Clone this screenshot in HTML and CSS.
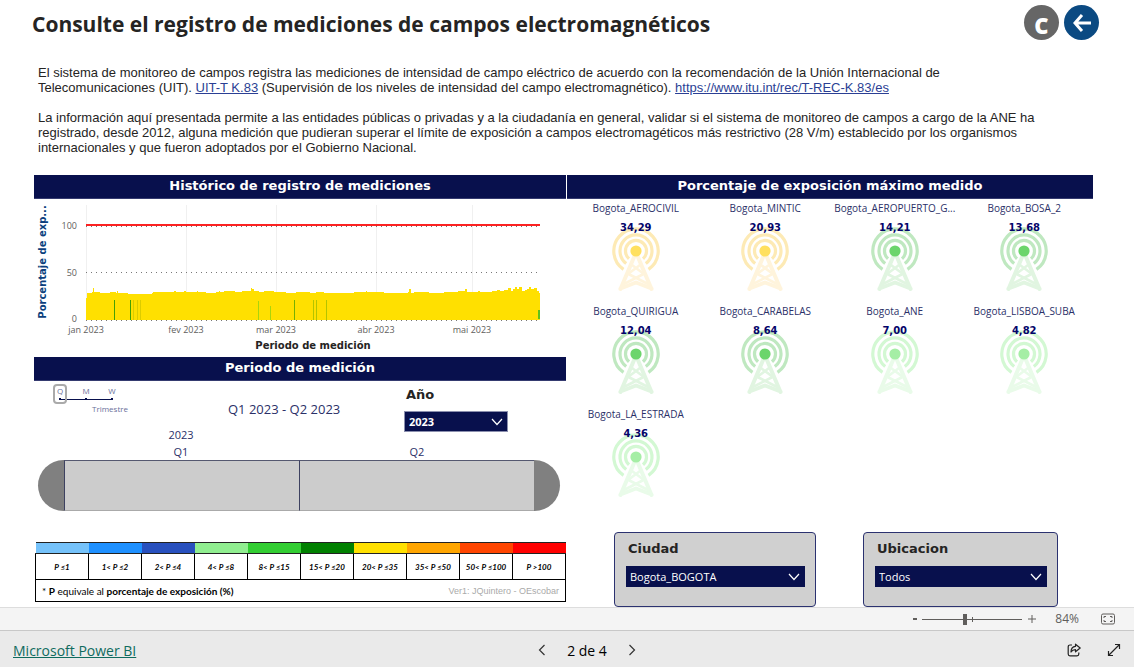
FILE: index.html
```
<!DOCTYPE html>
<html lang="es">
<head>
<meta charset="utf-8">
<title>Mediciones de campos electromagnéticos</title>
<link rel="stylesheet" href="styles.css">
</head>
<body>
<svg class="defs" aria-hidden="true">
  <symbol id="antenna" viewBox="0 0 48 64">
    <g class="tower" fill="none" stroke-linecap="round" stroke-linejoin="round">
      <path stroke-width="4" d="M8.500 62 22.500 29M39.500 62 25.500 29M8.500 61.500 24 55.500 39.500 61.500"/>
      <path stroke-width="2.600" d="M20 38 32 47M28 38 16 47M16.500 47 36 57M31.500 47 12 57"/>
    </g>
    <g class="rings" fill="none" stroke-width="3.200">
      <path d="M11.500 42.400A22.200 22.200 0 1 1 36.500 42.400"/>
      <path d="M14.200 36.600A16 16 0 1 1 33.800 36.600"/>
      <path d="M17 31.800A10.500 10.500 0 1 1 31 31.800"/>
    </g>
    <circle class="dot" cx="24" cy="24" r="5.600"/>
  </symbol>
  <symbol id="chevron" viewBox="0 0 12 8"><path d="M1 1 6 6.500 11 1" fill="none" stroke="currentColor" stroke-width="1.200"/></symbol>
</svg>

<main class="report">
  <header class="head">
    <h1 class="title">Consulte el registro de mediciones de campos electromagnéticos</h1>
    <nav class="head-actions">
      <button class="round round-gray" type="button" aria-label="Borrar filtros">C</button>
      <button class="round round-blue" type="button" aria-label="Atrás">
        <svg width="20" height="20" viewBox="0 0 20 20" fill="none" stroke="currentColor" stroke-width="3"><path d="M10 2 3 10 10 18M3 10H19"/></svg>
      </button>
    </nav>
  </header>

  <section class="intro">
    <p>El sistema de monitoreo de campos registra las mediciones de intensidad de campo eléctrico de acuerdo con la recomendación de la Unión Internacional de<br>Telecomunicaciones (UIT). <a href="#">UIT-T K.83</a> (Supervisión de los niveles de intensidad del campo electromagnético). <a href="#">https://www.itu.int/rec/T-REC-K.83/es</a></p>
    <p>La información aquí presentada permite a las entidades públicas o privadas y a la ciudadanía en general, validar si el sistema de monitoreo de campos a cargo de la ANE ha<br>registrado, desde 2012, alguna medición que pudieran superar el límite de exposición a campos electromagéticos más restrictivo (28 V/m) establecido por los organismos<br>internacionales y que fueron adoptados por el Gobierno Nacional.</p>
  </section>

  <div class="columns">
    <div class="col">
      <h2 class="band">Histórico de registro de mediciones</h2>
      <svg class="chart" viewBox="0 0 532 158" role="img" aria-label="Histórico de registro de mediciones">
        <path class="grid" d="M52.500 6V121M152.500 6V121M242.500 6V121M342.500 6V121M438.500 6V121"/>
        <path class="dots" d="M52 27.500H506M52 73.500H506M52 121.500H506"/>
        <g class="area" transform="translate(0 1)">
          <path d="M52 120V98H53V93H58V92H59V88H60V92H66V93H76V92H82V93H83V91H84V93H94V94H118V93H119V92H140V91H142V92H150V91H152V92H163V91H164V92H172V93H182V92H185V91H186V92H190V91H201V92H208V91H217V88H218V89H220V91H225V92H230V91H240V92H252V93H262V92H276V93H282V92H290V93H320V92H332V91H333V92H350V93H374V92H375V89H377V93H380V92H395V93H410V92H424V91H431V89H433V92H444V91H446V92H458V91H463V90H466V91H470V90H474V88H477V91H479V89H481V87H483V89H485V87H488V91H491V90H493V89H495V87H497V89H500V88H503V91H505V93H506V120Z"/>
        </g>
        <g class="bars">
          <path stroke="#44a005" d="M80.500 101V121M96.500 101V121"/>
          <path stroke="#dccc00" d="M99.500 101V121M103.500 101V121M106.500 101V121"/>
          <path stroke="#a9d40c" d="M224.500 102V121M236.500 107V121"/>
          <path stroke="#74b003" d="M260.500 101V121"/>
          <path stroke="#b4c400" d="M279.500 101V121M282.500 101V121M292.500 101V121"/>
          <path stroke="#5ec11c" stroke-width="2" d="M505 111V120"/>
        </g>
        <path class="limit" d="M52 26H506"/>
        <g class="ticks">
          <g text-anchor="end"><text x="43" y="30">100</text><text x="43" y="77">50</text><text x="43" y="123">0</text></g>
          <g text-anchor="middle"><text x="52" y="134">jan 2023</text><text x="152" y="134">fev 2023</text><text x="242" y="134">mar 2023</text><text x="342" y="134">abr 2023</text><text x="438" y="134">mai 2023</text></g>
        </g>
        <text class="axis" text-anchor="middle" x="279" y="150">Periodo de medición</text>
        <text class="axis axis-y" text-anchor="middle" transform="translate(12 63) rotate(-90)">Porcentaje de exp...</text>
      </svg>

      <h2 class="band">Periodo de medición</h2>
      <section class="period">
        <div class="period-top">
          <div class="grain">
            <div class="grain-row">
              <button type="button" class="grain-btn active">Q</button>
              <button type="button" class="grain-btn">M</button>
              <button type="button" class="grain-btn">W</button>
            </div>
            <span class="grain-name">Trimestre</span>
          </div>
          <output class="range">Q1 2023 - Q2 2023</output>
          <div class="year">
            <label class="filter-label" for="year">Año</label>
            <div class="picker">
              <select id="year" class="bold"><option>2023</option></select>
              <svg class="chev" width="12" height="8"><use href="#chevron"/></svg>
            </div>
          </div>
        </div>
        <div class="quarters">
          <span class="quarter">2023<br>Q1</span>
          <span class="quarter">Q2</span>
        </div>
        <div class="timeline">
          <button type="button" class="cap cap-l" aria-label="Inicio del periodo"></button>
          <button type="button" class="block" aria-label="Q1 2023"></button>
          <button type="button" class="block" aria-label="Q2 2023"></button>
          <button type="button" class="cap cap-r" aria-label="Fin del periodo"></button>
        </div>
      </section>

      <table class="legend">
        <thead>
          <tr><th class="c1"></th><th class="c2"></th><th class="c3"></th><th class="c4"></th><th class="c5"></th><th class="c6"></th><th class="c7"></th><th class="c8"></th><th class="c9"></th><th class="c10"></th></tr>
        </thead>
        <tbody>
          <tr><td>P ≤1</td><td>1&lt; P ≤2</td><td>2&lt; P ≤4</td><td>4&lt; P ≤8</td><td>8&lt; P ≤15</td><td>15&lt; P ≤20</td><td>20&lt; P ≤35</td><td>35&lt; P ≤50</td><td>50&lt; P ≤100</td><td>P &gt;100</td></tr>
        </tbody>
        <tfoot>
          <tr><td colspan="10"><div class="note"><span>* <b>P</b> equivale al <b>porcentaje de exposición (%)</b></span><span class="version">Ver1: JQuintero - OEscobar</span></div></td></tr>
        </tfoot>
      </table>
    </div>

    <div class="col">
      <h2 class="band">Porcentaje de exposición máximo medido</h2>
      <ul class="stations">
        <li class="station yellow"><span class="name">Bogota_AEROCIVIL</span><div class="reading"><svg class="icon"><use href="#antenna"/></svg><b>34,29</b></div></li>
        <li class="station yellow"><span class="name">Bogota_MINTIC</span><div class="reading"><svg class="icon"><use href="#antenna"/></svg><b>20,93</b></div></li>
        <li class="station green"><span class="name">Bogota_AEROPUERTO_G...</span><div class="reading"><svg class="icon"><use href="#antenna"/></svg><b>14,21</b></div></li>
        <li class="station green"><span class="name">Bogota_BOSA_2</span><div class="reading"><svg class="icon"><use href="#antenna"/></svg><b>13,68</b></div></li>
        <li class="station green"><span class="name">Bogota_QUIRIGUA</span><div class="reading"><svg class="icon"><use href="#antenna"/></svg><b>12,04</b></div></li>
        <li class="station green"><span class="name">Bogota_CARABELAS</span><div class="reading"><svg class="icon"><use href="#antenna"/></svg><b>8,64</b></div></li>
        <li class="station light"><span class="name">Bogota_ANE</span><div class="reading"><svg class="icon"><use href="#antenna"/></svg><b>7,00</b></div></li>
        <li class="station light"><span class="name">Bogota_LISBOA_SUBA</span><div class="reading"><svg class="icon"><use href="#antenna"/></svg><b>4,82</b></div></li>
        <li class="station light"><span class="name">Bogota_LA_ESTRADA</span><div class="reading"><svg class="icon"><use href="#antenna"/></svg><b>4,36</b></div></li>
      </ul>
      <div class="filters">
        <div class="card">
          <label class="filter-label" for="city">Ciudad</label>
          <div class="picker"><select id="city"><option>Bogota_BOGOTA</option></select><svg class="chev" width="12" height="8"><use href="#chevron"/></svg></div>
        </div>
        <div class="card">
          <label class="filter-label" for="place">Ubicacion</label>
          <div class="picker"><select id="place"><option>Todos</option></select><svg class="chev" width="12" height="8"><use href="#chevron"/></svg></div>
        </div>
      </div>
    </div>
  </div>
</main>

<div class="zoombar">
  <button class="plain" type="button" aria-label="Alejar"><svg width="6" height="12" viewBox="0 0 6 12"><path d="M1 6H5" stroke="currentColor" stroke-width="2"/></svg></button>
  <div class="zoom"><input type="range" min="0" max="200" value="84" aria-label="Zoom"></div>
  <button class="plain" type="button" aria-label="Acercar"><svg width="8" height="12" viewBox="0 0 8 12"><path d="M0 6H8M4 2V10" stroke="currentColor"/></svg></button>
  <span class="percent">84%</span>
  <button class="plain" type="button" aria-label="Ajustar a la página">
    <svg width="14" height="12" viewBox="0 0 14 12" fill="none" stroke="currentColor"><rect x=".5" y="1" width="13" height="10" rx="1.500"/><path d="M3 5V3.500H5M9 3.500H11V5M11 7V8.500H9M5 8.500H3V7"/></svg>
  </button>
</div>

<footer class="footer">
  <a class="brand" href="#">Microsoft Power BI</a>
  <nav class="pager">
    <button class="plain" type="button" aria-label="Página anterior"><svg width="8" height="12" viewBox="0 0 8 12" fill="none" stroke="currentColor" stroke-width="1.200"><path d="M6.500 1 1.500 6 6.500 11"/></svg></button>
    <span>2 de 4</span>
    <button class="plain" type="button" aria-label="Página siguiente"><svg width="8" height="12" viewBox="0 0 8 12" fill="none" stroke="currentColor" stroke-width="1.200"><path d="M1.500 1 6.500 6 1.500 11"/></svg></button>
  </nav>
  <div class="tools">
    <button class="plain" type="button" aria-label="Compartir"><svg width="14" height="14" viewBox="0 0 14 14" fill="none" stroke="currentColor" stroke-width="1.200" stroke-linejoin="round"><path d="M5 2H3A1.800 1.800 0 0 0 1.200 3.800V11A1.800 1.800 0 0 0 3 12.800H10A1.800 1.800 0 0 0 11.800 11V9.500"/><path d="M8.500 1.200 13.200 5 8.500 8.800V6.700C6.500 6.700 5 7.400 4 9 4 5.500 5.800 3.500 8.500 3.300Z"/></svg></button>
    <button class="plain" type="button" aria-label="Pantalla completa"><svg width="14" height="14" viewBox="0 0 14 14" fill="none" stroke="currentColor" stroke-width="1.200"><path d="M1.500 12.500 12.500 1.500M8 1.500H12.500V6M1.500 8V12.500H6"/></svg></button>
  </div>
</footer>
</body>
</html>
```

FILE: styles.css
```
* { box-sizing: border-box; }

body {
  margin: 0;
  min-height: 100vh;
  display: flex;
  flex-direction: column;
  background: #fff;
  color: #252423;
  font-family: "Open Sans", "Noto Sans", sans-serif;
}

button, select { font: inherit; color: inherit; border: 0; padding: 0; background: none; }
h1, h2, p, ul { margin: 0; padding: 0; }
svg { display: block; }
.defs { position: absolute; width: 0; height: 0; }

.report { flex: 1; display: flex; flex-direction: column; }

.head {
  display: flex;
  justify-content: space-between;
  padding: 5px 35px 0 32px;
}
.title { font-size: 21px; line-height: 38px; font-weight: 700; }
.head-actions { display: flex; gap: 5px; }
.round {
  width: 35px;
  height: 35px;
  border-radius: 50%;
  display: flex;
  align-items: center;
  justify-content: center;
  color: #fff;
}
.round-gray { padding-top: 5px; background: #666; font: 800 22px/30px "Open Sans", sans-serif; }
.round-blue { background: #0b4a82; }

.intro {
  display: flex;
  flex-direction: column;
  gap: 15px;
  padding: 22px 38px 20px;
  font: 13px/15px "Liberation Sans", Arial, sans-serif;
}
.intro a { color: #2b3f94; }

.columns {
  flex: 1;
  display: grid;
  grid-template-columns: 532fr 526fr;
  gap: 1px;
  padding: 0 41px 0 34px;
}
.col { display: flex; flex-direction: column; min-width: 0; }

.band {
  height: 24px;
  background: #08104d;
  border-bottom: 1px solid #353b70;
  color: #fff;
  text-align: center;
  font: 700 13px/21px "DejaVu Sans", sans-serif;
}

.chart { width: 100%; }
.grid { stroke: #f0f0f0; }
.dots { stroke: #777; stroke-dasharray: 1 4; }
.area { fill: #ffe000; shape-rendering: crispEdges; }
.limit { stroke: #fb2222; stroke-width: 2; }
.ticks { font-size: 9px; fill: #605e5c; }
.axis { font: 700 10px "DejaVu Sans", sans-serif; fill: #252423; }
.axis-y { fill: #0b3f7d; }

.period { padding: 0 6px 0 4px; color: #2b3068; }
.period-top { display: flex; height: 44px; }
.grain { width: 90px; margin: 3px 0 0 15px; }
.grain-row {
  display: flex;
  gap: 12px;
  background: linear-gradient(#08104d, #08104d) 7px 15px / 51px 1px no-repeat;
}
.grain-btn {
  width: 14px;
  height: 20px;
  border: 2px solid transparent;
  border-radius: 4px;
  font-size: 8px;
  line-height: 10px;
  color: #6a6f99;
  padding-bottom: 6px;
  background: linear-gradient(#08104d, #08104d) 4px 12px / 2px 2px no-repeat;
}
.grain-btn.active { border-color: #aaa; }
.grain-name { display: block; padding-left: 39px; font-size: 8px; line-height: 10px; color: #6a6f99; }
.range { flex: 1; padding: 18px 0 0 85px; font-size: 13px; line-height: 20px; }
.year { width: 104px; margin: 5px 52px 0 0; color: #252423; }

.filter-label { display: block; padding-left: 2px; font: 700 13px/18px "DejaVu Sans", sans-serif; color: #252423; }
.picker { display: grid; align-items: center; }
.picker select {
  grid-area: 1 / 1;
  width: 100%;
  height: 21px;
  appearance: none;
  background: #08104d;
  border: 1px solid #8b8fae;
  border-radius: 0;
  color: #fff;
  font-size: 11px;
  padding-left: 4px;
}
.picker .bold { font-weight: 700; }
.chev { grid-area: 1 / 1; justify-self: end; margin-right: 5px; color: #fff; pointer-events: none; }
.year .picker { padding-top: 7px; }

.quarters {
  display: grid;
  grid-template-columns: 1fr 1fr;
  align-items: end;
  padding: 0 25px;
  height: 35px;
  font-size: 11px;
  line-height: 17px;
  text-align: center;
}
.timeline { display: flex; height: 51px; }
.cap { width: 26px; background: #808080; }
.cap-l { border-radius: 26px 0 0 26px; }
.cap-r { border-radius: 0 26px 26px 0; }
.block { flex: 1; background: #ccc; border: 1px solid #aaa; border-top-color: #555870; border-left-color: #3d4160; border-right: 0; }

.legend {
  width: calc(100% - 1px);
  margin: auto 0 5px 1px;
  border-collapse: collapse;
  table-layout: fixed;
  color: #000;
}
.legend th { height: 11px; padding: 0; border: 1px solid #222; border-width: 1px 0; }
.legend td { padding: 0; border: 1px solid #000; }
.legend tbody td { height: 26px; font: italic 700 8px/10px Lato, sans-serif; text-align: center; }
.legend tfoot td { height: 22px; font-size: 10px; line-height: 14px; }
.note { display: flex; justify-content: space-between; padding: 0 6px; font-family: Lato, sans-serif; }
.version { color: #aaa; font-family: "Liberation Sans", Arial, sans-serif; font-size: 9px; }
.c1 { background: #75c2fa; }
.c2 { background: #1e90ff; }
.c3 { background: #2850be; }
.c4 { background: #90ee90; }
.c5 { background: #32cd32; }
.c6 { background: #008000; }
.c7 { background: #ffe000; }
.c8 { background: #ffa500; }
.c9 { background: #ff4500; }
.c10 { background: #f00; }

.stations {
  list-style: none;
  display: grid;
  grid-template-columns: repeat(4, 1fr);
  grid-auto-rows: 103px;
  padding: 3px 4px 0;
}
.station { display: flex; flex-direction: column; align-items: center; gap: 7px; color: #08104d; }
.name { font-size: 10px; line-height: 12px; color: #2b3068; }
.reading { display: grid; justify-items: center; }
.reading b { grid-area: 1 / 1; font: 700 10px/14px "DejaVu Sans", sans-serif; color: #04046a; z-index: 1; }
.icon { grid-area: 1 / 1; width: 48px; height: 64px; margin-top: 6px; }
.tower { stroke: var(--tower); }
.rings { stroke: var(--ring); }
.dot { fill: var(--dot); }
.yellow { --ring: #fdeab5; --tower: #fff4dc; --dot: #ffe05f; }
.green { --ring: #bfe8c0; --tower: #e1f5e1; --dot: #6cd56c; }
.light { --ring: #d3f8d3; --tower: #e9fbe9; --dot: #a5eea5; }

.filters {
  display: grid;
  grid-template-columns: 202fr 195fr;
  gap: 47px;
  margin-top: auto;
  padding: 0 35px 0 47px;
}
.card { height: 75px; padding: 7px 10px 7px 11px; background: #d0d0d0; border: 1px solid #2b3270; border-radius: 4px; }
.card .picker { padding-top: 8px; }
.card .picker select { border-color: #08104d; padding-left: 3px; }

.zoombar {
  height: 24px;
  display: flex;
  align-items: center;
  justify-content: flex-end;
  padding-right: 19px;
  background: #f4f4f4;
  border-top: 1px solid #ddd;
  border-bottom: 1px solid #c8c8c8;
  color: #605e5c;
}
.plain { display: flex; cursor: pointer; }
.zoom {
  width: 100px;
  margin: 0 6px 0 4px;
  background: linear-gradient(#605e5c, #605e5c) 50px 50% / 1px 5px no-repeat;
}
.zoom input { display: block; width: 100%; height: 14px; margin: 0; appearance: none; background: linear-gradient(#605e5c, #605e5c) 0 50% / 100% 1px no-repeat; }
.zoom input::-webkit-slider-thumb { appearance: none; width: 4px; height: 11px; background: #605e5c; }
.percent { margin: 0 22px 0 19px; font-size: 12px; line-height: 16px; }

.footer {
  height: 36px;
  display: grid;
  grid-template-columns: 120px 1fr 80px;
  align-items: center;
  padding: 2px 13px 0;
  background: #eaeaea;
  font-size: 14px;
}
.brand { color: #0f6b5e; white-space: nowrap; }
.pager { display: flex; align-items: center; justify-content: center; gap: 21px; color: #000; }
.pager svg { color: #333; }
.tools { display: flex; justify-content: flex-end; gap: 26px; color: #222; }
```
